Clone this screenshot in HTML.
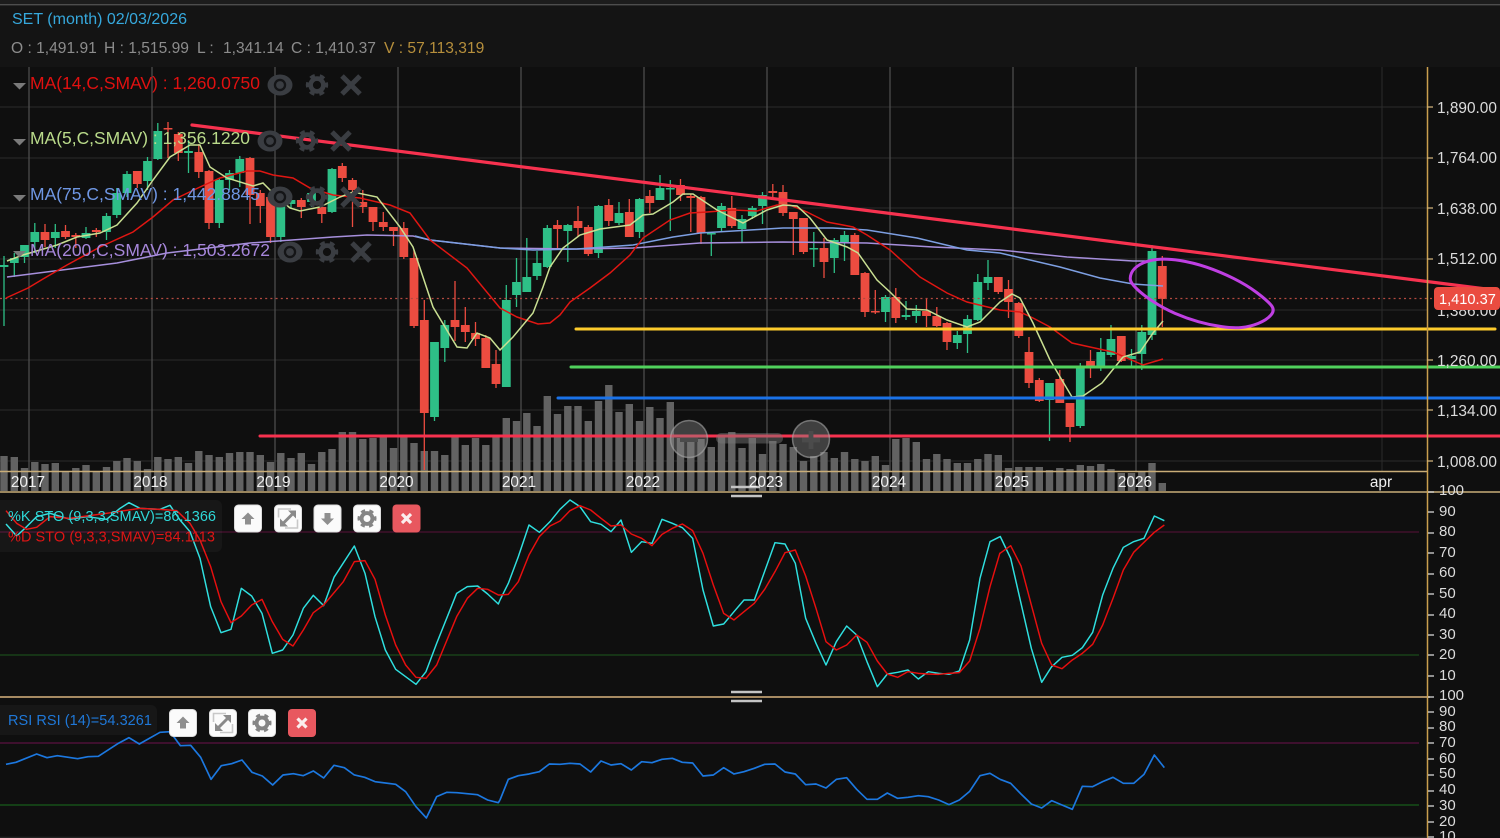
<!DOCTYPE html>
<html><head><meta charset="utf-8"><title>SET</title>
<style>
html,body{margin:0;padding:0;background:#0f0f0f;width:1500px;height:838px;overflow:hidden}
svg{display:block;font-family:"Liberation Sans",sans-serif;filter:blur(.35px)}
</style></head><body>
<svg width="1500" height="838" viewBox="0 0 1500 838" xmlns="http://www.w3.org/2000/svg">
<defs>
<g id="gear"><circle r="6.4" fill="none" stroke="currentColor" stroke-width="4.6"/><g transform="rotate(-15)"><circle r="9.3" fill="none" stroke="currentColor" stroke-width="3.8" stroke-dasharray="4.87 4.87"/></g></g>
<g id="eye"><ellipse rx="12.5" ry="10.5" fill="#3a3d42"/><circle r="6.2" fill="#141517"/><circle r="3.9" fill="#3a3d42"/></g>
<g id="x"><path d="M-9-9 9 9M9-9-9 9" stroke="#3a3d42" stroke-width="5" fill="none"/></g>
<g id="up"><path d="M0-6.500 6.500 0H3V5.500H-3V0H-6.500Z" fill="#8f8f8f"/></g>
<g id="down"><path d="M0 6.500 6.500 0H3V-5.500H-3V0H-6.500Z" fill="#8f8f8f"/></g>
<g id="exp"><path d="M-9.500-1V-9.500H3M9.500 1V9.500H-3" fill="none" stroke="#c8c8c8" stroke-width="1.6"/><path d="M-5 5 5-5" stroke="#8a8a8a" stroke-width="3"/><path d="M0-8H8V0ZM0 8H-8V0Z" fill="#8a8a8a"/></g>
<g id="cl"><path d="M-4.500-4.500 4.500 4.500M4.500-4.500-4.500 4.500" stroke="#fbeeee" stroke-width="3.2" fill="none"/></g>
</defs>

<rect width="1500" height="838" fill="#0f0f0f"/>
<rect width="1500" height="67" fill="#141414"/>
<rect y="0" width="1500" height="4" fill="#1c1c1c"/>
<rect y="4" width="1500" height="1.4" fill="#4d4d4d"/>

<!-- grid -->
<path d="M0 107H1427M0 158H1427M0 208H1427M0 259H1427M0 310H1427M0 360H1427M0 410H1427M0 461H1427" stroke="#2b2b2b" stroke-width="1"/>
<path d="M29 67V471M152 67V471M275 67V471M398 67V471M521 67V471M644 67V471M767 67V471M890 67V471M1013 67V471M1136 67V471" stroke="#505050" stroke-width="1.2"/>
<path d="M1382 67V471" stroke="#2b2b2b" stroke-width="1"/>

<!-- volume -->
<path stroke="#626262" stroke-width="7.4" fill="none" d="M4 456V491M14.3 457V491M24.5 468V491M34.8 462V491M45 464V491M55.3 463V491M65.5 472V491M75.8 468V491M86 465V491M96.3 472V491M106.5 467V491M116.8 461V491M127 458V491M137.3 461V491M147.5 469V491M157.8 457V491M168 459V491M178.3 457V491M188.5 463V491M198.8 451V491M209 455V491M219.3 457V491M229.5 453V491M239.8 452V491M250 452V491M260.3 455V491M270.5 462V491M280.8 453V491M291 458V491M301.3 453V491M311.5 464V491M321.8 452V491M332 449V491M342.3 432V491M352.5 432V491M362.8 439V491M373 438V491M383.3 437V491M393.5 448V491M403.8 437V491M414 443V491M424.3 451V491M434.5 451V491M444.8 455V491M455 437V491M465.3 445V491M475.5 438V491M485.8 445V491M496 437V491M506.3 418V491M516.5 421V491M526.8 413V491M537 426V491M547.3 396V491M557.5 414V491M567.8 406V491M578 406V491M588.3 421V491M598.5 401V491M608.8 385V491M619 412V491M629.3 404V491M639.5 421V491M649.8 407V491M660 418V491M670.3 402V491M680.5 438V491M690.8 439V491M701 439V491M711.3 447V491M721.5 435V491M731.8 432V491M742 448V491M752.3 438V491M762.5 454V491M772.8 441V491M783 444V491M793.3 447V491M803.5 461V491M813.8 456V491M824 452V491M834.3 458V491M844.5 452V491M854.8 459V491M865 461V491M875.3 456V491M885.5 465V491M895.8 439V491M906 438V491M916.3 442V491M926.5 459V491M936.8 454V491M947 459V491M957.3 463V491M967.5 463V491M977.8 459V491M988 454V491M998.3 455V491M1008.5 468V491M1018.8 467V491M1029 467V491M1039.3 467V491M1049.5 470V491M1059.8 468V491M1070 469V491M1080.3 465V491M1090.5 466V491M1100.8 464V491M1111 469V491M1121.3 473V491M1131.5 473V491M1141.8 472V491M1152 463V491M1162.3 483V491"/>

<!-- candle wicks and bodies -->
<path stroke="#2ebf87" stroke-width="1.3" fill="none" d="M4 256V326M14.3 253V277M24.5 245V263M34.8 223V253M55.3 224V248M86 227V239M106.5 213V240M116.8 188V218M127 171V197M147.5 157V190M157.8 123V160M188.5 140V173M219.3 178V228M229.5 170V190M239.8 156V187M280.8 200V242M291 198V208M311.5 192V207M332 168V213M434.5 342V421M444.8 320V362M506.3 285V387M516.5 258V307M526.8 238V292M537 251V280M547.3 225V268M567.8 224V262M598.5 205V258M619 202V225M639.5 198V238M660 175V200M670.3 180V231M711.3 232V256M721.5 203V231M742 215V242M752.3 206V219M762.5 192V224M813.8 232V267M834.3 238V273M844.5 231V261M885.5 295V322M906 301V320M916.3 305V323M957.3 331V349M967.5 315V353M977.8 274V321M988 260V290M1049.5 383V441M1080.3 363V428M1100.8 338V371M1111 325V357M1131.5 349V366M1141.8 325V370M1152 245V340"/>
<path stroke="#2ebf87" stroke-width="8.8" fill="none" d="M4 265V267M14.3 258V263M24.5 245V257M34.8 232V242M55.3 232V238M86 233V238M106.5 216V232M116.8 193V215M127 174V193M147.5 161V181M157.8 131V159M188.5 151V153M219.3 180V223M229.5 173V180M239.8 159V173M280.8 204V237M291 200V204M311.5 193V202M332 169V212M434.5 342V417M444.8 325V348M506.3 300V387M516.5 282V295M526.8 277V292M537 263V276M547.3 228V267M567.8 225V231M598.5 206V253M619 213V223M639.5 199V232M660 188V200M670.3 188V189.5M711.3 233V234.5M721.5 206V228M742 219V229M752.3 208V216M762.5 195V206M813.8 248V249.5M834.3 240V258M844.5 235V242M885.5 297V312M906 315V317M916.3 311V316M957.3 335V343M967.5 319V334M977.8 282V320M988 277V283M1049.5 383V400M1080.3 367V426M1100.8 352V367M1111 339V355M1131.5 356V359M1141.8 332V354M1152 251V335"/>
<path stroke="#ec4c40" stroke-width="1.3" fill="none" d="M45 224V247M65.5 225V239M75.8 233V248M96.3 228V237M137.3 171V188M168 122V158M178.3 132V161M198.8 144V178M209 170V229M250 157V224M260.3 190V223M270.5 197V243M301.3 198V218M321.8 193V223M342.3 163V182M352.5 178V227M362.8 190V213M373 207V231M383.3 212V231M393.5 227V246M403.8 222V259M414 250V328M424.3 300V470M455 281V341M465.3 307V342M475.5 322V346M485.8 335V368M496 350V388M557.5 220V250M578 206V237M588.3 225V256M608.8 199V226M629.3 199V237M649.8 190V213M680.5 179V201M690.8 194V232M701 196V244M731.8 196V228M772.8 184V197M783 185V216M793.3 212V255M803.5 218V254M824 238V278M854.8 233V275M865 272V317M875.3 290V314M895.8 288V323M926.5 298V327M936.8 307V327M947 322V350M998.3 277V294M1008.5 280V318M1018.8 302V338M1029 337V388M1039.3 378V402M1059.8 370V403M1070 403V442M1090.5 350V378M1121.3 336V362M1162.3 256V327"/>
<path stroke="#ec4c40" stroke-width="8.8" fill="none" d="M45 232V240M65.5 231V237M75.8 235V237M96.3 230V232M137.3 171V184M168 128V129.5M178.3 134V153M198.8 152V172M209 171V223M250 158V195M260.3 193V206M270.5 197V237M301.3 200V207M321.8 207V214M342.3 166V178M352.5 180V190M362.8 202V207M373 207V222M383.3 222V227M393.5 227V231M403.8 228V257M414 258V326M424.3 320V413M455 320V327M465.3 325V332M475.5 333V339M485.8 338V368M496 364V384M557.5 225V229M578 221V228M588.3 227V254M608.8 205V221M629.3 212V237M649.8 196V203M680.5 185V195M690.8 196V198M701 197V233M731.8 208V226M772.8 191V193M783 192V213M793.3 212V219M803.5 218V252M824 248V262M854.8 235V275M865 273V312M875.3 311V312.5M895.8 297V318M926.5 311V316M936.8 316V326M947 323V342M998.3 277V292M1008.5 289V302M1018.8 303V336M1029 352V383M1039.3 380V401M1059.8 379V403M1070 403V427M1090.5 361V367M1121.3 336V361M1162.3 266V299"/>

<!-- last price dotted -->
<path d="M0 298.5H1433" stroke="#b34a40" stroke-width="1.2" stroke-dasharray="2 3.2"/>

<!-- moving averages -->
<polyline fill="none" stroke="#a68fdc" stroke-width="1.5" points="7,277 117,263 167,253 250,243 333,237 367,235 413,236 430,240 500,248 577,249 633,248 700,243 783,242 867,243 933,247 1000,250 1067,257 1133,261 1147,261"/>
<polyline fill="none" stroke="#7d9fe2" stroke-width="1.5" points="415,236 430,240 500,248 533,250 577,249 633,245 673,237 700,233 750,230 783,228 833,228 867,230 917,238 967,250 1000,253 1060,267 1100,278 1133,284 1163,286"/>
<polyline fill="none" stroke="#e01612" stroke-width="1.5" points="6,298 28,288 43,279 67,265 100,247 133,232 153,217 173,200 200,187 220,178 247,171 260,171 273,175 293,178 310,188 333,195 360,198 390,205 410,213 430,240 467,268 500,308 517,317 538,324 550,323 560,315 570,302 590,288 610,273 630,255 643,238 670,220 690,213 707,212 733,210 757,211 777,205 790,205 807,212 827,222 843,225 853,227 867,235 890,250 920,277 947,293 967,302 1000,310 1020,312 1033,318 1050,327 1072,343 1090,347 1113,352 1127,358 1143,365 1163,359"/>
<polyline fill="none" stroke="#c9df92" stroke-width="1.5" points="7,261 23,255 57,245 77,237 100,233 117,225 137,203 153,180 170,157 190,145 200,145 210,167 227,178 253,186 263,183 277,197 290,208 300,211 320,207 340,197 353,192 377,197 400,227 413,247 423,277 433,307 457,347 467,348 477,333 490,338 500,350 513,337 533,313 543,287 550,267 563,248 580,235 600,229 630,225 643,215 653,214 673,202 683,194 693,194 717,210 743,223 767,210 783,205 797,206 810,218 827,240 847,247 858,253 877,280 890,292 907,309 927,310 947,320 967,327 980,322 1000,302 1012,294 1020,298 1033,323 1050,360 1072,397 1083,396 1102,383 1123,357 1140,352 1153,333 1163,321"/>

<!-- drawings -->
<path d="M192 125 1490 289.5" stroke="#f7324f" stroke-width="3.2" stroke-linecap="round"/>
<path d="M576 329H1495" stroke="#fdcb2c" stroke-width="3" stroke-linecap="round"/>
<path d="M571 367H1500" stroke="#50d25c" stroke-width="3" stroke-linecap="round"/>
<path d="M558 398H1500" stroke="#1a72e8" stroke-width="3" stroke-linecap="round"/>
<path d="M260 436H1500" stroke="#f7324f" stroke-width="3" stroke-linecap="round"/>
<g transform="translate(1000,170) scale(.33333)">
<path fill="none" stroke="#bf3fe2" stroke-width="9" d="M394 310Q400 295 420 283.500Q440 272 470 268.500Q500 265 540 271.500Q580 278 620 291.500Q660 305 700 325Q740 345 770 367.500Q800 390 813 405Q826 420 813 435Q800 450 775 460Q750 470 725 472.500Q700 475 665 470Q630 465 595 455Q560 445 525 430Q490 415 460 395Q430 375 414 360Q398 345 393 335Q388 325 394 310Z"/>
</g>

<!-- zoom controls -->
<rect x="716" y="433" width="67" height="10.5" rx="5" fill="#7a7a7a" fill-opacity=".45"/>
<circle cx="689" cy="439" r="18.5" fill="#858585" fill-opacity=".42" stroke="#a8a8a8" stroke-opacity=".6" stroke-width="1.5"/>
<rect x="680" y="437.500" width="18" height="4.500" fill="#4b4b4b"/>
<circle cx="811" cy="439" r="18.5" fill="#858585" fill-opacity=".42" stroke="#a8a8a8" stroke-opacity=".6" stroke-width="1.5"/>
<path d="M811 431V449M802 440H820" stroke="#4b4b4b" stroke-width="4.8"/>

<!-- axis frame -->
<path d="M0 471.5H1427M0 492H1500" stroke="#c9ad78" stroke-width="1.4" fill="none"/>
<path d="M0 697H1430" stroke="#d9b47e" stroke-width="1.6"/>
<path d="M1427.5 67V838" stroke="#c99f4f" stroke-width="1.5"/>
<path d="M0 837.3H1427" stroke="#2c2c2c" stroke-width="1"/>
<path d="M731 487H760M731 496H762M731 692H762M731 701H762" stroke="#c4c4c4" stroke-width="2.4"/>

<!-- stochastic bands + lines -->
<path d="M0 532H1419" stroke="#4a1032" stroke-width="1.2"/>
<path d="M0 655H1419" stroke="#1a4a1a" stroke-width="1.2"/>
<path d="M0 743H1419" stroke="#5a1040" stroke-width="1.2"/>
<path d="M0 805H1419" stroke="#175c1a" stroke-width="1.2"/>

<g fill="none" stroke-width="4.4" stroke-linejoin="round">
<g transform="translate(0,490) scale(.33333)">
<polyline stroke="#2fe0e0" points="18,102 50,138 80,110 110,80 150,70 210,88 260,80 320,88 360,55 387,38 420,55 480,58 510,46 540,90 570,125 600,205 632,350 663,428 693,418 724,295 755,318 786,370 817,490 848,480 879,435 910,355 940,316 971,347 1002,262 1063,168 1095,250 1125,380 1156,480 1187,538 1248,583 1278,545 1310,460 1370,310 1402,290 1433,288 1463,312 1495,342 1500,330"/>
<polyline stroke="#e80f0f" points="18,62 50,100 80,118 110,112 150,80 210,85 260,78 320,70 420,55 480,58 530,62 570,100 600,150 632,230 663,335 693,398 724,378 755,345 786,328 817,395 848,448 879,468 910,420 940,368 971,345 1030,275 1063,215 1095,212 1125,268 1156,375 1187,465 1217,525 1248,562 1278,565 1310,525 1370,380 1402,325 1433,295 1463,298 1495,315 1500,315"/>
<polyline stroke="#1c78e0" stroke-width="5" points="18,823 48,817 110,792 141,803 172,797 233,806 264,800 295,799 355,760 387,743 418,762 480,727 510,725 541,767 572,766 602,802 633,868 664,827 695,821 726,810 756,847 787,858 818,885 849,855 880,851 910,857 940,843 971,864 1002,826 1033,833 1063,855 1094,862 1125,875 1187,883 1217,905 1248,950 1279,984 1310,920 1340,907 1371,908 1432,914 1463,930 1495,938 1500,930"/>
</g>
<g transform="translate(500,490) scale(.33333)">
<polyline stroke="#2fe0e0" points="0,330 25,280 55,200 87,105 118,127 150,95 180,58 210,30 240,50 272,95 303,103 333,125 363,90 394,187 425,155 456,160 486,88 517,100 547,113 578,145 609,300 640,408 671,402 702,365 732,330 763,330 825,158 855,162 886,220 917,385 948,460 978,525 1009,455 1040,408 1070,435 1101,515 1132,590 1162,552 1193,547 1224,540 1255,567 1285,545 1316,550 1347,553 1378,543 1409,450 1440,265 1470,155 1500,140"/>
<polyline stroke="#e80f0f" points="0,315 25,313 55,275 87,195 118,140 150,108 180,93 210,62 240,47 272,60 303,85 333,108 363,105 394,132 425,145 456,167 486,133 517,115 547,102 578,122 609,190 640,285 671,370 702,390 732,365 763,340 794,298 825,245 855,188 886,180 917,258 948,355 978,455 1009,480 1040,465 1070,435 1101,457 1132,513 1162,552 1193,562 1224,545 1255,550 1285,552 1316,553 1347,550 1378,548 1409,513 1440,415 1470,290 1500,188"/>
<polyline stroke="#1c78e0" stroke-width="5" points="0,930 25,868 55,857 87,852 118,845 148,822 180,823 210,820 240,822 272,846 303,813 333,825 363,821 394,840 425,815 456,818 486,808 517,805 547,817 578,819 609,858 640,855 671,833 702,852 732,845 763,835 794,823 825,822 855,846 886,852 917,884 948,882 978,894 1009,868 1040,863 1070,898 1101,928 1132,928 1162,909 1193,925 1224,922 1255,917 1285,920 1316,930 1347,944 1378,930 1409,904 1440,857 1470,850 1500,868"/>
</g>
<g transform="translate(1000,490) scale(.33333)">
<polyline stroke="#2fe0e0" points="0,138 32,205 63,340 94,475 125,577 155,530 186,502 217,496 247,473 278,427 308,315 339,235 370,172 401,155 432,145 463,78 493,92"/>
<polyline stroke="#e80f0f" points="0,190 32,167 63,228 94,345 125,460 155,525 186,536 217,510 247,490 278,463 308,405 339,325 370,240 401,187 432,157 463,127 493,105"/>
<polyline stroke="#1c78e0" stroke-width="5" points="0,868 32,880 63,912 94,942 125,954 155,932 186,945 217,958 247,889 278,890 308,875 339,862 370,880 401,880 432,853 463,795 493,833"/>
</g>
</g>

<!-- header text -->
<text x="12" y="24" font-size="16" fill="#36a8dc" textLength="175" lengthAdjust="spacingAndGlyphs">SET (month) 02/03/2026</text>
<g font-size="15.6" fill="#8c8c8c">
<text x="11" y="53">O : 1,491.91</text>
<text x="104" y="53">H : 1,515.99</text>
<text x="197" y="53">L :</text>
<text x="223" y="53">1,341.14</text>
<text x="291" y="53">C : 1,410.37</text>
<text x="384" y="53" fill="#b68f3c">V : 57,113,319</text>
</g>

<!-- MA legends -->
<path d="M13 83H26L19.500 89.500Z M13 139H26L19.500 145.500Z M13 195H26L19.500 201.500Z M13 251H26L19.500 257.500Z" fill="#7a7a7a"/>
<g font-size="17.4" lengthAdjust="spacingAndGlyphs">
<text x="30" y="89" fill="#e01010" textLength="230" lengthAdjust="spacingAndGlyphs">MA(14,C,SMAV) : 1,260.0750</text>
<text x="30" y="144" fill="#b9da8a" textLength="220" lengthAdjust="spacingAndGlyphs">MA(5,C,SMAV) : 1,356.1220</text>
<text x="30" y="200" fill="#6f97e4" textLength="230" lengthAdjust="spacingAndGlyphs">MA(75,C,SMAV) : 1,442.8845</text>
<text x="30" y="256" fill="#a686da" textLength="240" lengthAdjust="spacingAndGlyphs">MA(200,C,SMAV) : 1,503.2672</text>
</g>
<g color="#3a3d42">
<use href="#eye" x="280" y="85"/><use href="#gear" x="317" y="85"/><use href="#x" x="351" y="85"/>
<use href="#eye" x="270" y="141"/><use href="#gear" x="307" y="141"/><use href="#x" x="341" y="141"/>
<use href="#eye" x="280" y="197"/><use href="#gear" x="317" y="197"/><use href="#x" x="351" y="197"/>
<use href="#eye" x="290" y="252"/><use href="#gear" x="327" y="252"/><use href="#x" x="361" y="252"/>
</g>

<!-- x axis labels -->
<g font-size="15.4" fill="#efefef" text-anchor="middle">
<text x="28" y="487">2017</text><text x="150.500" y="487">2018</text><text x="273.500" y="487">2019</text><text x="396.500" y="487">2020</text><text x="519" y="487">2021</text><text x="643" y="487">2022</text><text x="766" y="487">2023</text><text x="889" y="487">2024</text><text x="1012" y="487">2025</text><text x="1135" y="487">2026</text><text x="1381" y="487">apr</text>
</g>

<!-- y axis -->
<path stroke="#d0b27a" stroke-width="1.3" d="M1427 107H1433M1427 158H1433M1427 208H1433M1427 259H1433M1427 360H1433M1427 410H1433M1427 461H1433"/>
<path stroke="#dddddd" stroke-width="1.3" d="M1428 492H1434M1428 512H1434M1428 533H1434M1428 553H1434M1428 574H1434M1428 594H1434M1428 615H1434M1428 635H1434M1428 655H1434M1428 676H1434M1428 697H1434M1428 712H1434M1428 728H1434M1428 743H1434M1428 759H1434M1428 775H1434M1428 791H1434M1428 806H1434M1428 822H1434M1428 837H1434"/>
<g font-size="15.4" fill="#dcdcdc">
<text x="1437" y="113">1,890.00</text><text x="1437" y="163">1,764.00</text><text x="1437" y="214">1,638.00</text><text x="1437" y="264">1,512.00</text><text x="1437" y="316">1,386.00</text><text x="1437" y="366">1,260.00</text><text x="1437" y="416">1,134.00</text><text x="1437" y="467">1,008.00</text>
</g>
<g font-size="15" fill="#dcdcdc">
<text x="1439" y="495">100</text><text x="1439" y="516">90</text><text x="1439" y="536">80</text><text x="1439" y="557">70</text><text x="1439" y="577">60</text><text x="1439" y="598">50</text><text x="1439" y="618">40</text><text x="1439" y="639">30</text><text x="1439" y="659">20</text><text x="1439" y="680">10</text>
<text x="1439" y="700">100</text><text x="1439" y="716">90</text><text x="1439" y="731">80</text><text x="1439" y="747">70</text><text x="1439" y="763">60</text><text x="1439" y="778">50</text><text x="1439" y="794">40</text><text x="1439" y="810">30</text><text x="1439" y="826">20</text><text x="1439" y="841">10</text>
</g>
<rect x="1434" y="287" width="66" height="23" rx="4" fill="#ea4c40"/>
<text x="1439" y="304" font-size="14.6" fill="#ffffff">1,410.37</text>

<!-- indicator legends -->
<path d="M0 500H216a6 6 0 0 1 6 6V546a6 6 0 0 1-6 6H0Z" fill="#ffffff" fill-opacity=".035"/>
<path d="M0 705H151a6 6 0 0 1 6 6V729a6 6 0 0 1-6 6H0Z" fill="#ffffff" fill-opacity=".035"/>
<text x="8" y="521" font-size="14.5" fill="#2ed8d8" textLength="208">%K STO (9,3,3,SMAV)=86.1366</text>
<text x="8" y="541.500" font-size="14.5" fill="#e01515" textLength="207">%D STO (9,3,3,SMAV)=84.1113</text>
<text x="8" y="725" font-size="14.5" fill="#1f78d8" textLength="144">RSI RSI (14)=54.3261</text>

<!-- buttons -->
<g fill="#fbfbfb" stroke="#dcdcdc" stroke-width="1">
<rect x="234.500" y="505" width="27" height="27" rx="4"/><rect x="274.500" y="505" width="27" height="27" rx="4"/><rect x="314" y="505" width="27" height="27" rx="4"/><rect x="353.500" y="505" width="27" height="27" rx="4"/>
<rect x="169.500" y="709.500" width="27" height="27" rx="4"/><rect x="209.500" y="709.500" width="27" height="27" rx="4"/><rect x="248.500" y="709.500" width="27" height="27" rx="4"/>
</g>
<rect x="392.500" y="504.500" width="28" height="28" rx="4" fill="#e8585f"/>
<rect x="288" y="709" width="28" height="28" rx="4" fill="#e8585f"/>
<g color="#858585">
<use href="#up" x="248" y="519"/><use href="#exp" x="288" y="518.500"/><use href="#down" x="327.500" y="518.500"/><g transform="translate(367,518.500) scale(.85)"><use href="#gear"/></g><use href="#cl" x="406.500" y="518.500"/>
<use href="#up" x="183" y="723"/><use href="#exp" x="223" y="723"/><g transform="translate(262,723) scale(.85)"><use href="#gear"/></g><use href="#cl" x="302" y="723"/>
</g>
</svg>
</body></html>
